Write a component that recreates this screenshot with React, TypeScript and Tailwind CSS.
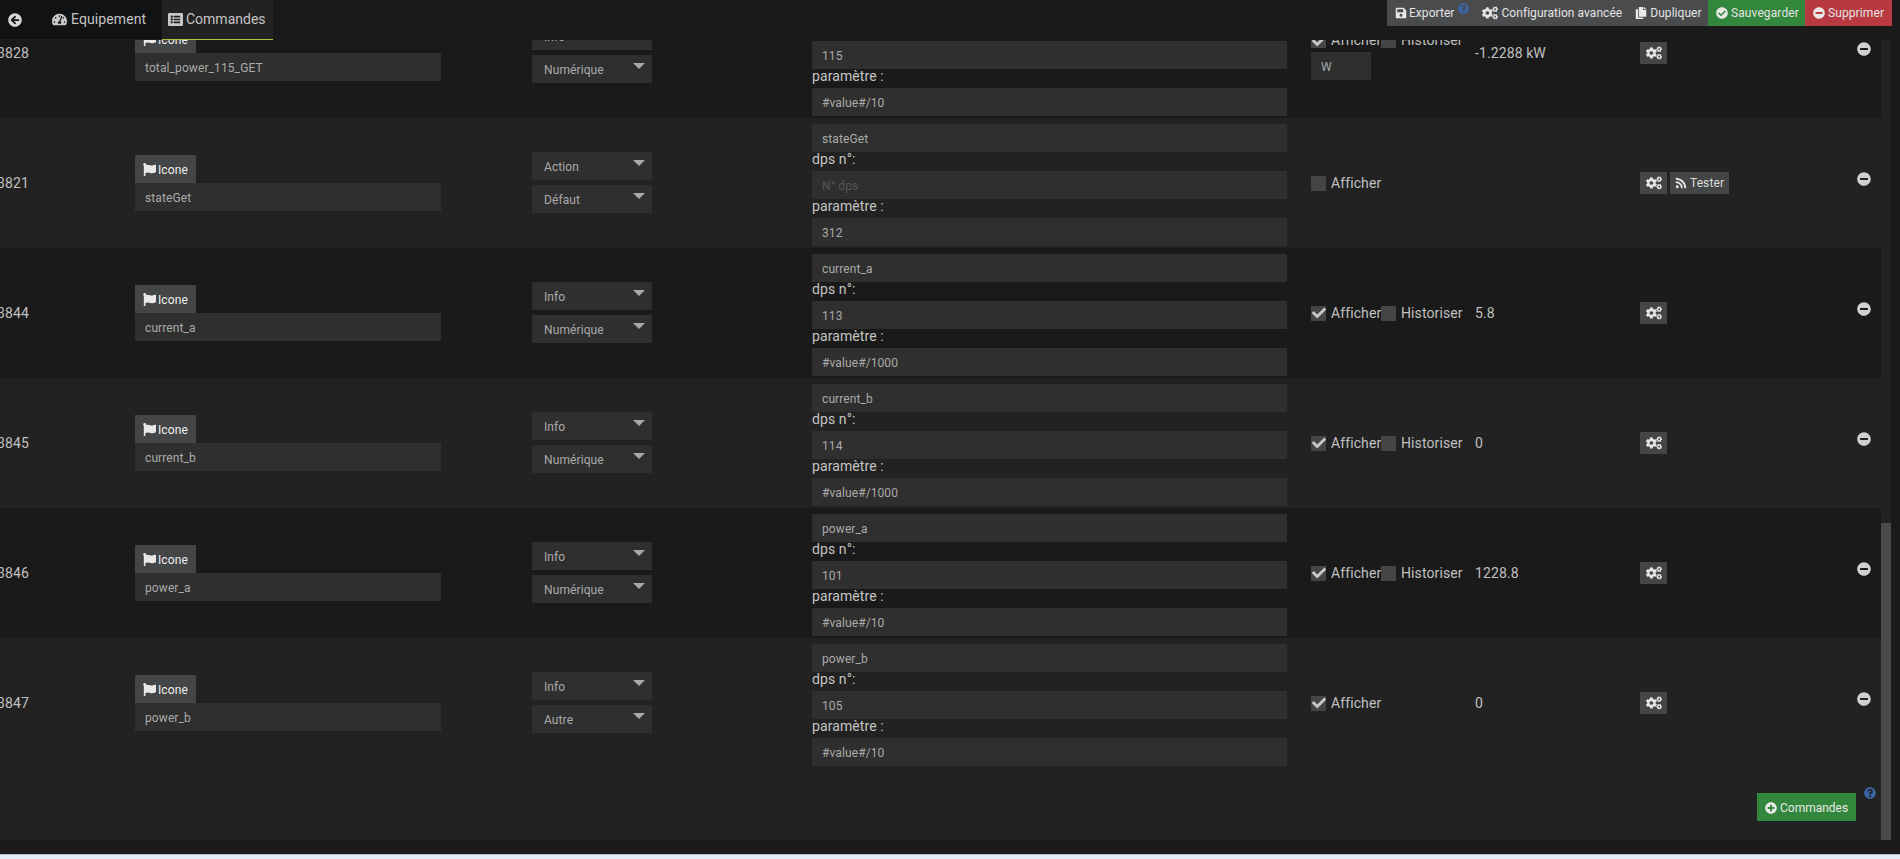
import React from "react";
import {
  FaArrowCircleLeft,
  FaTachometerAlt,
  FaListAlt,
  FaFlag,
  FaCogs,
  FaSave,
  FaCopy,
  FaCheckCircle,
  FaMinusCircle,
  FaPlusCircle,
  FaQuestionCircle,
  FaRss,
  FaCheck,
} from "react-icons/fa";

type Cmd = {
  id: string;
  name: string;
  type: string;
  sub: string;
  dps: string;
  param: string;
  checked: boolean;
  hist: boolean;
  unit?: string;
  value?: string;
  test?: boolean;
};

const cmds: Cmd[] = [
  { id: "3828", name: "total_power_115_GET", type: "Info", sub: "Numérique", dps: "115", param: "#value#/10", checked: true, hist: true, unit: "W", value: "-1.2288 kW" },
  { id: "3821", name: "stateGet", type: "Action", sub: "Défaut", dps: "", param: "312", checked: false, hist: false, test: true },
  { id: "3844", name: "current_a", type: "Info", sub: "Numérique", dps: "113", param: "#value#/1000", checked: true, hist: true, value: "5.8" },
  { id: "3845", name: "current_b", type: "Info", sub: "Numérique", dps: "114", param: "#value#/1000", checked: true, hist: true, value: "0" },
  { id: "3846", name: "power_a", type: "Info", sub: "Numérique", dps: "101", param: "#value#/10", checked: true, hist: true, value: "1228.8" },
  { id: "3847", name: "power_b", type: "Info", sub: "Autre", dps: "105", param: "#value#/10", checked: true, hist: false, value: "0" },
];

function Field({ children, muted }: { children: React.ReactNode; muted?: boolean }) {
  return (
    <div className={`h-[28px] shrink-0 bg-[#2f2f2f] pl-[10px] text-[12px] leading-[30px] ${muted ? "text-[#555555]" : "text-[#aaaaaa]"}`}>
      {children}
    </div>
  );
}

function Select({ label }: { label: string }) {
  return (
    <div className="relative h-[28px] w-[120px] bg-[#2f2f2f] pl-[12px] text-[12px] leading-[30px] text-[#aaaaaa]">
      {label}
      <svg className="absolute left-[101px] top-[8px]" width="12" height="6" viewBox="0 0 12 6">
        <polygon points="0,0 12,0 6,6" fill="#a8a8a8" />
      </svg>
    </div>
  );
}

function Check({ checked }: { checked: boolean }) {
  return (
    <span className="flex h-[15px] w-[15px] shrink-0 items-center justify-center bg-[#454545]">
      {checked && <FaCheck className="text-[14px] text-[#c8c8c8]" />}
    </span>
  );
}

function Row({ c, index }: { c: Cmd; index: number }) {
  return (
    <div className={`flex h-[130px] shrink-0 items-center ${index % 2 === 0 ? "bg-[#1a1a1a]" : "bg-[#222222]"} ${index === 0 ? "-mt-[52px]" : ""}`}>
      <div className="w-[135px] shrink-0 overflow-hidden">
        <div className="-ml-[3px] text-[14px] text-[#c0c0c0]">{c.id}</div>
      </div>
      <div className="flex w-[306px] shrink-0 flex-col items-start">
        <div className="flex h-[28px] w-[61px] items-center gap-[2px] bg-[#444546] pl-[8px] pt-[1px] text-[12px] text-[#eeeeee]">
          <FaFlag className="text-[13px] text-[#e8e8e8]" />
          <span>Icone</span>
        </div>
        <div className="h-[28px] w-full bg-[#2f2f2f] pl-[10px] text-[12px] leading-[30px] text-[#aaaaaa]">{c.name}</div>
      </div>
      <div className="ml-[91px] -mt-[1px] flex w-[120px] shrink-0 flex-col gap-[5px]">
        <Select label={c.type} />
        <Select label={c.sub} />
      </div>
      <div className="ml-[160px] flex w-[475px] shrink-0 flex-col self-start pt-[6px]">
        <Field>{c.name}</Field>
        <div className="h-[19px] text-[14px] leading-[15px] text-[#c4c4c4]">dps n°:</div>
        <Field muted={!c.dps}>{c.dps || "N° dps"}</Field>
        <div className="h-[19px] text-[14px] leading-[15px] text-[#c4c4c4]">paramètre :</div>
        <Field>{c.param}</Field>
      </div>
      <div className={`ml-[24px] flex w-[164px] shrink-0 flex-col ${c.unit ? "mt-[3px]" : ""}`}>
        <div className="flex h-[23px] items-center text-[14px] text-[#c0c0c0]">
          <Check checked={c.checked} />
          <span className="ml-[5px] w-[50px]">Afficher</span>
          {c.hist && (
            <>
              <Check checked={false} />
              <span className="ml-[5px]">Historiser</span>
            </>
          )}
        </div>
        {c.unit && (
          <div className="h-[28px] w-[60px] bg-[#2f2f2f] pl-[10px] text-[12px] leading-[30px] text-[#aaaaaa]">{c.unit}</div>
        )}
      </div>
      <div className="w-[165px] shrink-0 text-[14px] text-[#c0c0c0]">{c.value}</div>
      <div className="flex w-[217px] shrink-0 items-center gap-[3px]">
        <div className="flex h-[22px] w-[27px] items-center justify-center bg-[#444546]">
          <FaCogs className="text-[16px] text-[#e4e4e4]" />
        </div>
        {c.test && (
          <div className="flex h-[22px] w-[59px] items-center justify-center gap-[3px] bg-[#444546] text-[12px] text-[#dddddd]">
            <FaRss className="text-[12px] text-[#e4e4e4]" />
            <span>Tester</span>
          </div>
        )}
      </div>
      <div className="-mt-[8px] shrink-0">
        <FaMinusCircle className="text-[14px] text-[#d0d0d0]" />
      </div>
    </div>
  );
}

export default function App() {
  return (
    <div className="flex h-[859px] w-[1900px] flex-col overflow-hidden bg-[#1a1a1a] font-['Roboto',sans-serif] tracking-[0.1px]">
      <header className="relative z-10 flex h-[40px] shrink-0 items-start bg-[#1a1a1a]">
        <div className="flex h-[40px] w-[162px] shrink-0 items-center border-b border-[#1e1e1e] bg-[#111214] text-[14px] text-[#c4c4c4]">
          <FaArrowCircleLeft className="ml-[8px] text-[14px] text-[#d8d8d8]" />
          <FaTachometerAlt className="ml-[30px] text-[15px] text-[#c8c8c8]" />
          <span className="ml-[4px]">Equipement</span>
        </div>
        <div className="flex h-[40px] w-[111px] shrink-0 items-center border-b border-[#a4c639] bg-[#222222] pl-[6px] text-[14px] tracking-normal text-[#c4c4c4]">
          <FaListAlt className="text-[15px] text-[#c8c8c8]" />
          <span className="ml-[3px]">Commandes</span>
        </div>
        <div className="ml-auto mr-[8px] flex h-[26px] text-[12px] leading-[26px] text-[#e4e4e4]">
          <div className="flex w-[321px] items-center bg-[#4a4b4d] pl-[8px] tracking-[0.05px]">
            <FaSave className="text-[12px] text-[#e8e8e8]" />
            <span className="ml-[2px]">Exporter</span>
            <FaQuestionCircle className="ml-[4px] -mt-[10px] text-[11px] text-[#3a66a8]" />
            <FaCogs className="ml-[13px] text-[16px] text-[#e4e4e4]" />
            <span className="ml-[3px]">Configuration avancée</span>
            <FaCopy className="ml-[13px] text-[12px] text-[#e8e8e8]" />
            <span className="ml-[3px]">Dupliquer</span>
          </div>
          <div className="flex w-[97px] items-center bg-[#33873c] pl-[8px]">
            <FaCheckCircle className="text-[12px] text-[#e8e8e8]" />
            <span className="ml-[3px]">Sauvegarder</span>
          </div>
          <div className="flex w-[87px] items-center bg-[#b83a40] pl-[8px]">
            <FaMinusCircle className="text-[12px] text-[#e8e8e8]" />
            <span className="ml-[3px]">Supprimer</span>
          </div>
        </div>
      </header>
      <div className="flex h-[800px] shrink-0">
        <main className="flex w-[1881px] shrink-0 flex-col overflow-hidden">
          {cmds.map((c, i) => (
            <Row key={c.id} c={c} index={i} />
          ))}
          <div className="relative flex h-[72px] shrink-0 items-start justify-end bg-[#222222] pr-[25px] pt-[25px]">
            <div className="flex h-[28px] w-[99px] items-center bg-[#33873c] pl-[8px] pt-[1px] text-[12px] tracking-normal text-[#e8e8e8]">
              <FaPlusCircle className="text-[12px] text-[#e8e8e8]" />
              <span className="ml-[3px]">Commandes</span>
            </div>
            <FaQuestionCircle className="absolute left-[1864px] top-[19px] text-[12px] text-[#3a66a8]" />
          </div>
        </main>
        <div className="flex w-[10px] shrink-0 flex-col justify-end bg-[#222222]">
          <div className="h-[317px] bg-[#4a4a4a]" />
        </div>
      </div>
      <div className="h-[14px] shrink-0 bg-[#1a1a1a]" />
      <div className="h-[5px] shrink-0 border-t border-[#b8bcc4] bg-[#e3edf9]" />
    </div>
  );
}
